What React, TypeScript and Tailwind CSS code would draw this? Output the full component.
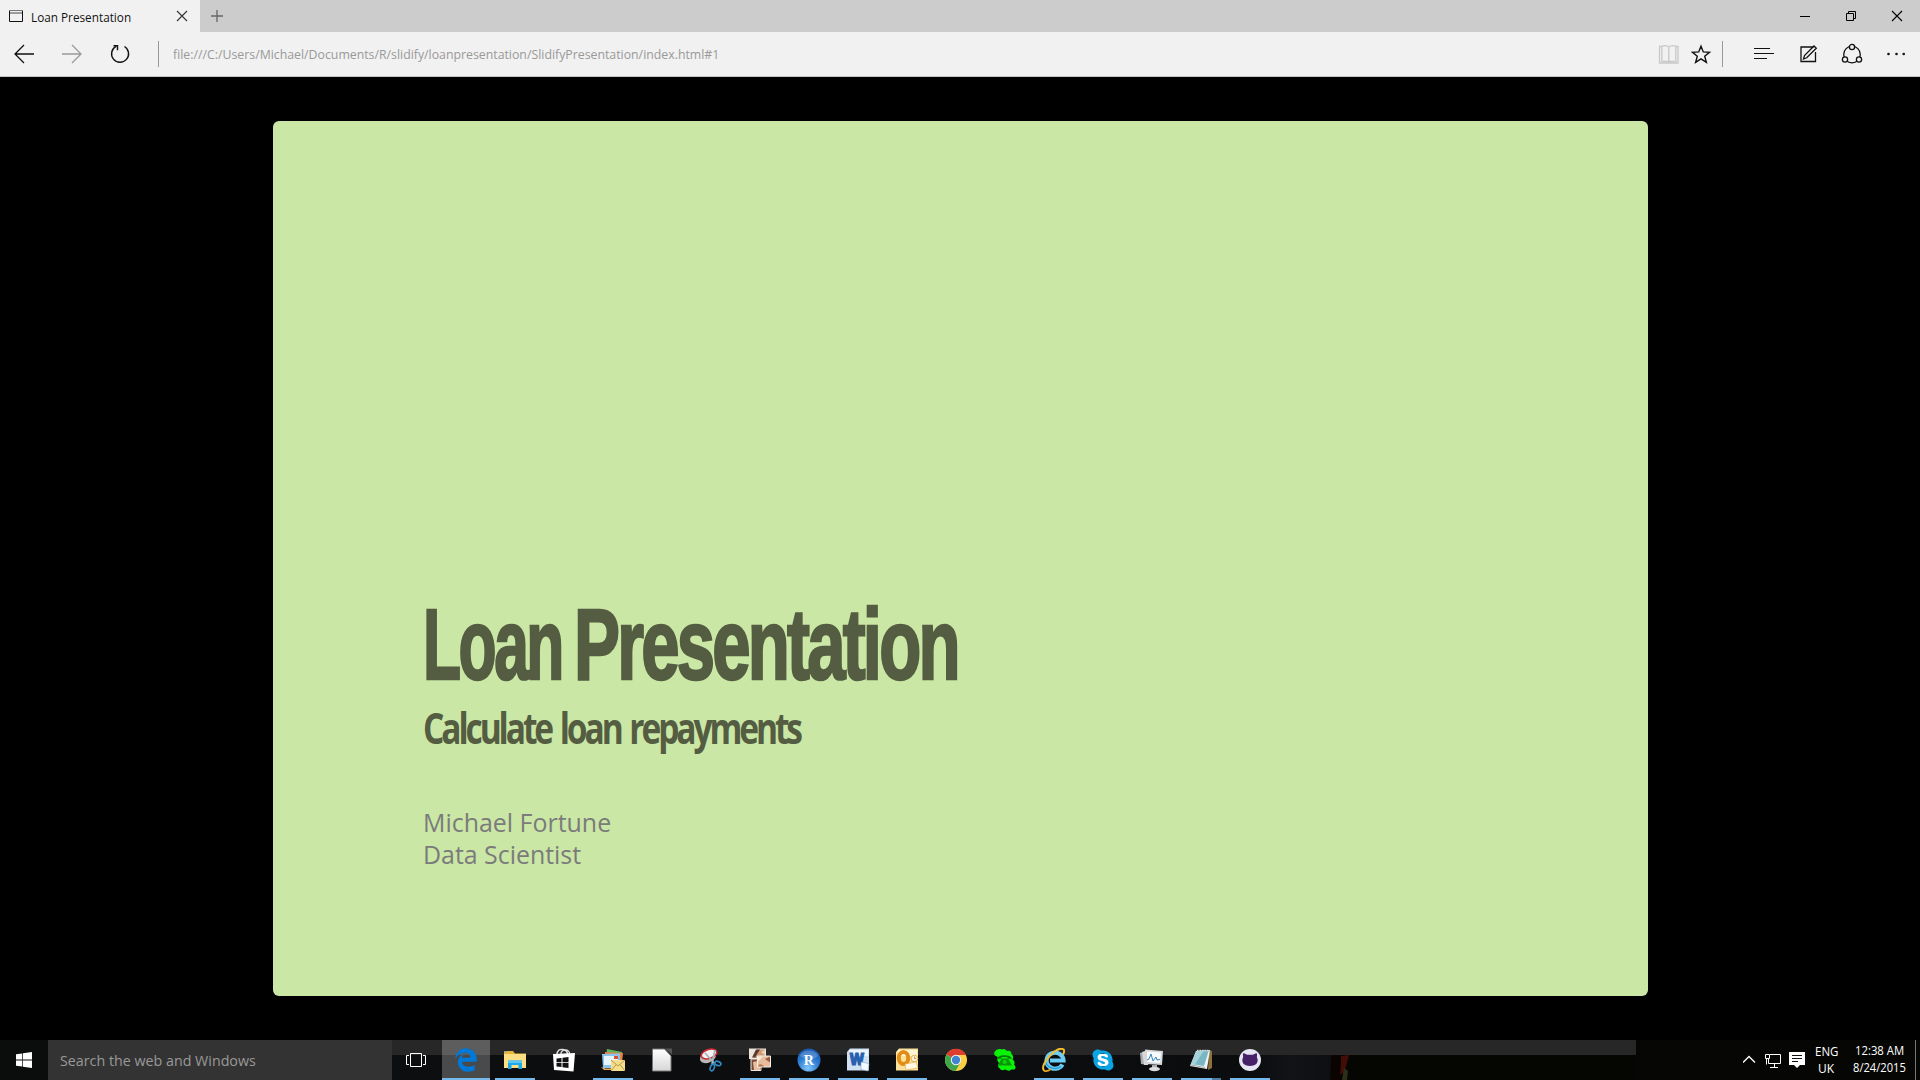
import { useLayoutEffect, useRef, useState, type ReactNode } from "react";
import { FaSkype } from "react-icons/fa";
import { FaEdgeLegacy } from "react-icons/fa6";

/** Single line of text condensed or widened horizontally to an exact width. */
function Fit({ width, className = "", children }: { width: number; className?: string; children: ReactNode }) {
  const ref = useRef<HTMLSpanElement>(null);
  const [scale, setScale] = useState(1);
  useLayoutEffect(() => {
    if (ref.current) setScale(width / ref.current.offsetWidth);
  }, [width]);
  return (
    <div className={`whitespace-nowrap ${className}`} style={{ width }}>
      <span ref={ref} className="inline-block origin-left" style={{ transform: `scaleX(${scale})` }}>
        {children}
      </span>
    </div>
  );
}

function TabBar() {
  return (
    <div className="flex h-8 bg-[#cccccc]">
      <div className="flex w-[200px] bg-[#f1f1f1]">
        <svg className="ml-2 mt-2 h-4 w-4" viewBox="0 0 16 16" fill="none" stroke="#111">
          <path d="M1.5 2v11.5h13V2" />
          <path d="M1 2.500h14" stroke="#777" />
          <path d="M2 5h12" stroke="#777" strokeWidth="1.4" />
        </svg>
        <Fit width={100} className="ml-[7px] mt-[10px] text-xs leading-4 text-[#111]">Loan Presentation</Fit>
        <svg className="ml-[45px] mt-[10px] h-3 w-3" viewBox="0 0 12 12" stroke="#333" strokeWidth="1.1">
          <path d="M1 1l10 10M11 1L1 11" />
        </svg>
      </div>
      <svg className="ml-[10px] mt-[9px] h-[14px] w-[14px]" viewBox="0 0 14 14" stroke="#666" strokeWidth="1.3">
        <path d="M1 7h12M7 1v12" />
      </svg>
      <svg className="ml-auto mr-[17px] mt-[10px] h-3 w-[103px]" viewBox="0 0 103 12" fill="none" stroke="#000">
        <path d="M0 6.500h10" />
        <path d="M46.500 3.500h7v7h-7z M48.500 3V1.500h7v7H54" />
        <path d="M92 1l10 10M102 1L92 11" strokeWidth="1.1" />
      </svg>
    </div>
  );
}

function Toolbar() {
  return (
    <div className="flex h-[45px] border-b border-[#c4c4c4] bg-[#f1f1f1]">
      <svg className="ml-[14px] mt-[12px] h-5 w-[116px]" viewBox="0 0 116 20" fill="none" strokeWidth="1.3">
        <path d="M10 1L1 10l9 9M1 10h19" stroke="#111" />
        <path d="M58 1l9 9-9 9M67 10H48" stroke="#999" />
        <path d="M102 2.300a8.500 8.500 0 1 0 8.500 0.200" stroke="#111" strokeWidth="1.4" />
        <path d="M99.500 1.700h4v4.500" stroke="#111" strokeWidth="1.4" />
      </svg>
      <div className="ml-7 mt-[9px] h-[26px] w-px bg-[#999]" />
      <Fit width={546} className="ml-[14px] mt-[14px] text-[13px] leading-4 text-[#999]">
        file:///C:/Users/Michael/Documents/R/slidify/loanpresentation/SlidifyPresentation/index.html#1
      </Fit>
      <svg className="ml-auto mt-[11px] h-[22px] w-[54px]" viewBox="0 0 54 22" fill="none">
        <path d="M3 3.500H1.500v16.500h18.500V3.500H18.500M10.800 19.500V4C9 2.600 6 2.400 3.800 3.300v15h7M10.800 4c1.800-1.400 4.800-1.600 7-.7v15h-7" stroke="#c8c8c8" strokeWidth="1.300" />
        <path d="M43 3.200l2.300 5.700 6.200.4-4.800 3.900 1.700 6.200-5.400-3.500-5.400 3.500 1.700-6.200-4.800-3.900 6.200-.4z" stroke="#111" strokeWidth="1.400" />
      </svg>
      <div className="ml-[10px] mt-[9px] h-[26px] w-px bg-[#999]" />
      <svg className="ml-[31px] mr-[11px] mt-[11px] h-[22px] w-[155px]" viewBox="0 0 155 22" fill="none" stroke="#111" strokeWidth="1.300">
        <path d="M0 5.500h16M0 10.500h20M0 15.500h12.500" strokeWidth="1" shapeRendering="crispEdges" />
        <path d="M61.500 9v9.500h-14.500V4h12.500" />
        <path d="M49.500 16l1-3.500L60 3l2.300 2.200-9.600 9.600z" />
        <circle cx="98" cy="11.500" r="8.300" />
        <g fill="#f1f1f1">
          <circle cx="98" cy="4" r="2.600" />
          <circle cx="91" cy="16.500" r="2.600" />
          <circle cx="105" cy="16.500" r="2.600" />
        </g>
        <g fill="#111" stroke="none">
          <circle cx="134.500" cy="11" r="1.300" />
          <circle cx="142.500" cy="11" r="1.300" />
          <circle cx="149.700" cy="11" r="1.300" />
        </g>
      </svg>
    </div>
  );
}

const glyph = "h-6 w-6";

const ExplorerIcon = () => (
  <svg className={glyph} viewBox="0 0 24 24">
    <path d="M1 3h9l2 2.500h11V20H1z" fill="#e8b63c" />
    <path d="M1 6h22v14H1z" fill="#fbdf82" />
    <path d="M1.500 3.500h2" stroke="#36a7e0" />
    <path d="M5 12.500h14V21h-3.500v-4h-7v4H5z" fill="#1ea8ec" />
    <path d="M5 12.500h14V15H5z" fill="#58c8f4" />
  </svg>
);
const StoreIcon = () => (
  <svg className={glyph} viewBox="0 0 24 24">
    <path d="M5 7C5 2 8 1 11 1.500c3 .5 4.500 2.500 4.500 5M9 6c0-3 2-4 4.500-4s4 2 4 4" fill="none" stroke="#ddd" strokeWidth="1.400" />
    <path d="M1 6l22-1-1.500 18.500L2 22z" fill="#fff" />
    <path d="M4.500 10.500l5-.6v4.300h-5zM10.500 9.700l6-.7v5.200h-6zM4.500 15.100h5v4l-5-.6zM10.500 15.100h6v4.900l-6-.8z" fill="#111" />
  </svg>
);
const MailIcon = () => (
  <svg className={glyph} viewBox="0 0 24 24">
    <path d="M6 1l15 3-1 10-15-4z" fill="#5cb860" />
    <path d="M4 4l18 1-1 10H4z" fill="#e98245" />
    <path d="M1 6l18-.5V20H2z" fill="#8bc5ee" />
    <path d="M3 8h14v9H3z" fill="#e6f4fc" />
    <path d="M13 8h4v3h-4z" fill="#d65131" />
    <path d="M-1 18c3 3 8 3 12 2v2H3z" fill="#e9aa55" />
    <path d="M10 12h14v11H10z" fill="#f5df8d" />
    <path d="M10 12l7 6 7-6M10 23l5-6.500M24 23l-5-6.500" fill="none" stroke="#aa8534" strokeWidth=".8" />
  </svg>
);
const DocIcon = () => (
  <svg className={glyph} viewBox="0 0 24 24">
    <defs><linearGradient id="doc" x2="0" y2="1"><stop stopColor="#fff" /><stop offset="1" stopColor="#d6d6d6" /></linearGradient></defs>
    <path d="M15 .5h7v6z" fill="#555" />
    <path d="M2.500 1h12L21 8v15H2.500z" fill="url(#doc)" stroke="#777" />
  </svg>
);
const SnipIcon = () => (
  <svg className={glyph} viewBox="0 0 24 24" fill="none">
    <ellipse cx="9" cy="9" rx="8.500" ry="5.500" fill="#b9b9b9" transform="rotate(-25 9 9)" />
    <ellipse cx="10" cy="6" rx="8" ry="4.500" fill="#f3f3f3" stroke="#cc2a32" strokeWidth="1.600" transform="rotate(-18 10 6)" />
    <path d="M6 5l10 11M16 2l-3 14" stroke="#a8b4bd" strokeWidth="1.800" />
    <ellipse cx="19" cy="15.500" rx="3.200" ry="2" stroke="#3187bf" strokeWidth="1.700" transform="rotate(20 19 15)" />
    <ellipse cx="13.500" cy="19.500" rx="2" ry="3.300" stroke="#3187bf" strokeWidth="1.700" transform="rotate(20 13 19)" />
  </svg>
);
const PhotosIcon = () => (
  <svg className={glyph} viewBox="0 0 24 24">
    <path d="M1 .5h17V11H1z" fill="#ece5dc" />
    <path d="M9 1.500h8V10H6z" fill="#cf9a76" />
    <path d="M8 1.500h4l-5 8H4z" fill="#5d3b2c" />
    <path d="M13 4l4-2v5z" fill="#f2d2b6" />
    <path d="M3 11h10v11.500H3z" fill="#7b4b35" stroke="#efe9e1" />
    <path d="M5 14l5-1 3 4-1 5H6z" fill="#e7bf9f" />
    <path d="M9.500 8h13v11h-13z" fill="#e8bd9c" stroke="#f5f0e9" />
    <path d="M10 8.500h5l-5 5z" fill="#f9ead9" />
    <path d="M17 11l5-2.500v6z" fill="#9a5f40" />
    <path d="M10 18.500c1-4 5-2 6 0z" fill="#b5764f" />
  </svg>
);
const RIcon = () => (
  <svg className={glyph} viewBox="0 0 24 24">
    <defs><radialGradient id="rball" cx=".45" cy=".85" r=".9"><stop stopColor="#82c8fa" /><stop offset=".5" stopColor="#2e7fd5" /><stop offset="1" stopColor="#124fa6" /></radialGradient></defs>
    <circle cx="12" cy="12" r="11.500" fill="url(#rball)" />
    <path d="M3 8a9.500 8 0 0 1 18 0c-5 4-12 4-18 0z" fill="#fff" opacity=".2" />
    <text x="11.800" y="16.500" textAnchor="middle" fontSize="14" fill="#fff" fontWeight="bold" fontFamily="Liberation Serif, serif">R</text>
  </svg>
);
const OfficeIcon = ({ kind }: { kind: "W" | "O" }) => {
  const main = kind === "W" ? "#255fae" : "#e38b12";
  const light = kind === "W" ? "#cfe0f3" : "#fbe29c";
  return (
    <svg className={glyph} viewBox="0 0 24 24">
      <path d="M4 .5h19v22H1V4z" fill={light} />
      <path d="M3 2h19v6H3z" fill="#fff" opacity=".6" />
      {kind === "W" ? (
        <>
          <text x="11" y="17" textAnchor="middle" fontSize={17} fontWeight="900" fill={main} stroke={main} strokeWidth=".8" fontFamily="Roboto, sans-serif">W</text>
          <path d="M15 14l8 1.500-1 7.500-7-1.500z" fill="#f5f8fc" stroke="#83a3cb" strokeWidth=".6" />
        </>
      ) : (
        <>
          <ellipse cx="8.500" cy="10" rx="4.700" ry="6" fill="none" stroke={main} strokeWidth="4" />
          <path d="M10 16l11-2 2 6-12 2z" fill="#fff8e6" stroke="#e2a53b" strokeWidth=".6" />
          <circle cx="19.500" cy="10.500" r="3.300" fill="#fdf3d8" stroke="#e0a040" strokeWidth=".8" />
          <path d="M19.500 8.500v2h1.800" fill="none" stroke="#c77d1b" strokeWidth=".8" />
        </>
      )}
    </svg>
  );
};
const ChromeIcon = () => (
  <svg className={glyph} viewBox="0 0 24 24">
    <circle cx="12" cy="12" r="11" fill="#fbd043" />
    <path d="M12 12L2.500 6.500A11 11 0 0 1 22 7H12z" fill="#de3c2f" />
    <path d="M2.500 6.500A11 11 0 0 0 11.500 23l5-8.500L12 12z" fill="#3fa64b" />
    <circle cx="12" cy="12" r="5.200" fill="#f4f4f4" />
    <circle cx="12" cy="12" r="4.200" fill="#4183d3" />
  </svg>
);
const PhoneIcon = () => (
  <svg className={glyph} viewBox="0 0 24 24">
    <path d="M1.500 4C3 1.500 6 .5 8.500 1.500 11 0 13 1.500 14 3c3-1 4.500.5 4.500 3 2 1.500 2 4 1 5.500 2.500 1.500 2.500 4 1.500 5 2 2 2 4.500 0 5-2 0-3-.5-4 1-2 .8-3.500-.5-5-1-2 1-4.500 1-5-1-2.500-1-2-4-1-5.500-2-2-2-4-1.200-6C1.500 8 .5 6 1.500 4z" fill="#08f305" />
    <path d="M4.500 11c-1-5 15-5 14 0l-4-.5v-1.600h-6v1.600z" fill="#087c08" />
    <path d="M8.500 10.500h6.500l4 7H5z" fill="#0b950b" />
    <circle cx="11.700" cy="14" r="2" fill="#08d905" />
  </svg>
);
const IEIcon = () => (
  <svg className={glyph} viewBox="0 0 24 24" fill="none">
    <path d="M20.500 16.500a8.500 8 0 1 1 1-4H8" stroke="#6ccdf5" strokeWidth="4.200" />
    <path d="M19 18.500a9.500 9 0 0 1-15-4" stroke="#239bd9" strokeWidth="1.300" />
    <path d="M2 22.500C-3 17 14-2 21 1c1.500.5 1.500 3 0 5.500" stroke="#f3bd2e" strokeWidth="2" />
    <path d="M2 22.500c2 1.500 5 0 7-1.500" stroke="#e5a71e" strokeWidth="1.600" />
  </svg>
);
const PerfIcon = () => (
  <svg className={glyph} viewBox="0 0 24 24">
    <path d="M0 5l7-2v14l-6-1z" fill="#a7a9aa" />
    <path d="M2 4l6-2v15H4z" fill="#d8dada" />
    <path d="M5 1.500L23 3l-1 14-17-1z" fill="#d4d6d7" />
    <path d="M7 3.500l14 1-.8 10.500L7 14z" fill="#f8fbfd" />
    <path d="M7 12l2-1 2-5 2 7 3-4 1 3 3-.5" fill="none" stroke="#3284bd" />
    <path d="M12 17h5v3h-5z" fill="#a8abad" />
    <ellipse cx="14.500" cy="21" rx="5.500" ry="2.200" fill="#dadcdd" />
  </svg>
);
const NotepadIcon = () => (
  <svg className={glyph} viewBox="0 0 24 24">
    <path d="M20 2l3 1v17l-4 2z" fill="#8d713c" />
    <path d="M7 3l14-1-3 19-17-3z" fill="#eef4f4" />
    <path d="M8 3l12-1-5 16-13-2z" fill="#78b7c4" />
    <path d="M8 3l7-.5L6 16.500 2 16z" fill="#a4d1da" />
    <path d="M2 17l14 2.500" stroke="#a4aaa9" />
    <path d="M8 2.500h12" stroke="#d9d9d9" strokeWidth="1.500" strokeDasharray="1.500 1" />
  </svg>
);
const GithubIcon = () => (
  <svg className={glyph} viewBox="0 0 24 24">
    <circle cx="12" cy="12" r="11" fill="#e5e5f3" />
    <path d="M5.500 5l3.700 1.800h5.600L18.500 5c.8 1.500.6 3 .3 4 2.500 5-.5 9-6.800 9s-9.300-4-6.800-9c-.3-1-.5-2.500.3-4z" fill="#472168" />
  </svg>
);

const apps: { icon: ReactNode; open: boolean; stacked?: boolean }[] = [
  { icon: <ExplorerIcon />, open: true },
  { icon: <StoreIcon />, open: false },
  { icon: <MailIcon />, open: true },
  { icon: <DocIcon />, open: false },
  { icon: <SnipIcon />, open: false },
  { icon: <PhotosIcon />, open: true },
  { icon: <RIcon />, open: true },
  { icon: <OfficeIcon kind="W" />, open: true },
  { icon: <OfficeIcon kind="O" />, open: true },
  { icon: <ChromeIcon />, open: false },
  { icon: <PhoneIcon />, open: false },
  { icon: <IEIcon />, open: true },
  { icon: <div className="relative grid place-items-center"><div className="absolute h-3 w-3 bg-white" /><FaSkype className="relative h-6 w-6 text-[#0aa4e4]" /></div>, open: true },
  { icon: <PerfIcon />, open: true },
  { icon: <NotepadIcon />, open: true, stacked: true },
  { icon: <GithubIcon />, open: true },
];

function Taskbar() {
  return (
    <div className="flex h-10 bg-[#060704]">
      <div className="w-12 bg-[#0b0d0d]">
        <svg className="ml-4 mt-3 h-4 w-4" viewBox="0 0 16 16" fill="#fff">
          <path d="M0 2.300l6.300-.9v6.100H0zM7 1.300L16 0v7.500H7zM0 8.500h6.300v6L0 13.700zM7 8.500h9V16l-9-1.200z" />
        </svg>
      </div>
      <div className="w-[344px] bg-[#333333]">
        <Fit width={196} className="ml-3 mt-[9px] text-[15px] leading-[22px] text-[#999]">Search the web and Windows</Fit>
      </div>
      <div className="flex w-[1244px] bg-[linear-gradient(#272727_15px,transparent_15px),linear-gradient(90deg,#0c0e10_0,#0b0c0e_860px,#111316_900px,#0d0f11_938px,#050601_942px,#050601_100%)]">
        <svg className="ml-[13px] mr-[15px] mt-3 h-4 w-[22px]" viewBox="0 0 22 16" fill="none" stroke="#fff">
          <path d="M5.500 1.500h11v13h-11zM4 3.500H1.500v9H4M18 3.500h2.500v9H18" />
        </svg>
        <div className="mr-px flex w-12 flex-col items-center border-b-2 border-[#76b9ed] bg-white/25 pt-2">
          <FaEdgeLegacy className="h-6 w-6 text-[#0078d7]" />
        </div>
        <div className="flex gap-px">
          {apps.map((app, i) => (
            <div key={i} className="flex w-12 flex-col items-center justify-between pt-2">
              {app.icon}
              {app.open && (
                <div className="flex h-0.5 w-10 bg-[#76b9ed]">
                  {app.stacked && <div className="ml-auto w-[9px] bg-[#4f7ba0]" />}
                </div>
              )}
            </div>
          ))}
        </div>
        <svg className="ml-[56px] mt-[15px] h-[25px] w-6" viewBox="0 0 24 25">
          <path d="M2 0h12l-3 25H0z" fill="#0a0300" />
          <path d="M11 1l8-1-3 12-2 5-4 3 1-12z" fill="#420c09" />
          <path d="M14 13l4 3-1 9h-5z" fill="#2c2f18" />
        </svg>
      </div>
      <svg className="ml-[107px] mt-[10px] h-5 w-[62px]" viewBox="0 0 62 20" fill="none" stroke="#fff">
        <path d="M0 12.500l6-6 6 6" strokeWidth="1.400" />
        <path d="M27 4.500h10.500v9H25.500V9M31.500 14v3M27 17.500h8M22.500 4.500h4v4h-4zM23.500 9v5.500" />
        <path d="M46 2h16v13h-5l-3 3-3-3h-5z" fill="#fff" stroke="none" />
        <path d="M49 5.500h10M49 8.500h10M49 11.500h6" stroke="#111" />
      </svg>
      <div className="ml-[9px] flex w-[24px] flex-col items-center text-xs leading-[17px] text-white">
        <Fit width={23} className="mt-[3px]">ENG</Fit>
        <Fit width={16}>UK</Fit>
      </div>
      <div className="ml-[14px] flex w-[54px] flex-col items-center text-xs leading-[17px] text-white">
        <Fit width={49} className="mt-0.5">12:38 AM</Fit>
        <Fit width={53}>8/24/2015</Fit>
      </div>
      <div className="ml-auto mr-1 w-px bg-[#777]" />
    </div>
  );
}

export default function App() {
  return (
    <div className="flex h-[1080px] w-[1920px] flex-col overflow-hidden bg-black font-['Open_Sans',sans-serif]">
      <TabBar />
      <Toolbar />
      <main className="flex flex-1 justify-center pt-11">
        <section className="h-[875px] w-[1375px] rounded-[6px] bg-[#cae7a5] pl-[150px] pt-[468px]">
          <h1 className="flex h-[110px] font-['Liberation_Sans',sans-serif] text-[100px] font-bold leading-[110px] tracking-[-4px] text-[#545d42] [-webkit-text-stroke:2.5px_#545d42]">
            <Fit width={139} className="mr-[12px]">Loan</Fit>
            <Fit width={384}>Presentation</Fit>
          </h1>
          <Fit width={377} className="mt-0.5 text-[43px] font-bold leading-[54px] tracking-[-4px] text-[#545d42] [word-spacing:4px]">
            Calculate loan repayments
          </Fit>
          <div className="mt-[51px] text-[26px] leading-8 text-[#7b7b7b]">
            <Fit width={188}>Michael Fortune</Fit>
            <Fit width={158}>Data Scientist</Fit>
          </div>
        </section>
      </main>
      <Taskbar />
    </div>
  );
}
